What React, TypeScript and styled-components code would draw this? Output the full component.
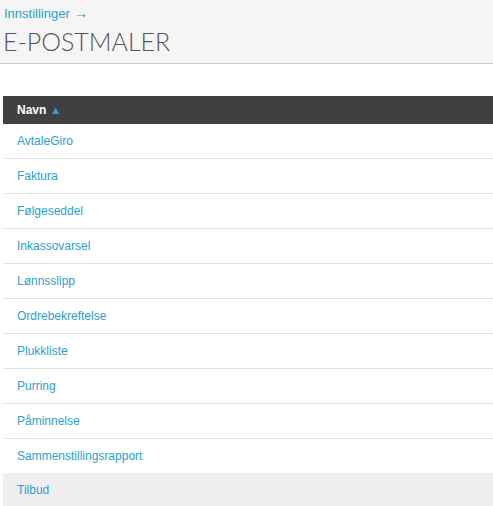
import styled, { createGlobalStyle } from 'styled-components'

const GlobalStyle = createGlobalStyle`
    html, body {
        margin: 0;
        padding: 0;
        background: #fff;
        font-family: "Liberation Sans", Arial, sans-serif;
    }
`

const StyledHeader = styled.header`
    background: #f5f5f5;
    border-bottom: 1px solid #c8c8c8;
    padding: 5px 4px 7px;
`

const StyledCrumb = styled.a`
    display: block;
    color: #2a9fd6;
    font-size: 13px;
    line-height: 16px;
    text-decoration: none;
`

const StyledCrumbArrow = styled.span`
    font-size: 15px;
`

const StyledTitle = styled.h1`
    margin: 5px 0 0 -1px;
    font-family: Lato, "Open Sans", sans-serif;
    font-weight: 300;
    font-size: 25px;
    line-height: 29px;
    color: #555;
`

const StyledContent = styled.main`
    padding: 32px 0 0 3px;
`

const StyledTable = styled.table`
    width: 100%;
    border-collapse: collapse;
    font-size: 12px;
`

const StyledTh = styled.th`
    background: #404040;
    color: #fff;
    font-weight: bold;
    text-align: left;
    height: 28px;
    padding: 0 14px;
`

const StyledArrow = styled.span`
    color: #3aa3d3;
    font-size: 11px;
    margin-left: 4px;
`

const StyledRow = styled.tr<{ $active?: boolean }>`
    background: ${({ $active }) => ($active ? '#efefef' : '#fff')};
    & + & td {
        border-top: 1px solid #e2e2e2;
    }
`

const StyledTd = styled.td`
    height: 34px;
    padding: 0 14px;
`

const StyledLink = styled.a`
    color: #2a9fd6;
    text-decoration: none;
`

const templates = [
    'AvtaleGiro',
    'Faktura',
    'Følgeseddel',
    'Inkassovarsel',
    'Lønnsslipp',
    'Ordrebekreftelse',
    'Plukkliste',
    'Purring',
    'Påminnelse',
    'Sammenstillingsrapport',
    'Tilbud',
]

export default function App() {
    return (
        <>
            <GlobalStyle />
            <StyledHeader>
                <StyledCrumb href="#">
                    Innstillinger <StyledCrumbArrow>→</StyledCrumbArrow>
                </StyledCrumb>
                <StyledTitle>E-POSTMALER</StyledTitle>
            </StyledHeader>
            <StyledContent>
                <StyledTable>
                    <thead>
                        <tr>
                            <StyledTh>
                                Navn<StyledArrow>▲</StyledArrow>
                            </StyledTh>
                        </tr>
                    </thead>
                    <tbody>
                        {templates.map((name) => (
                            <StyledRow key={name} $active={name === 'Tilbud'}>
                                <StyledTd>
                                    <StyledLink href="#">{name}</StyledLink>
                                </StyledTd>
                            </StyledRow>
                        ))}
                    </tbody>
                </StyledTable>
            </StyledContent>
        </>
    )
}
